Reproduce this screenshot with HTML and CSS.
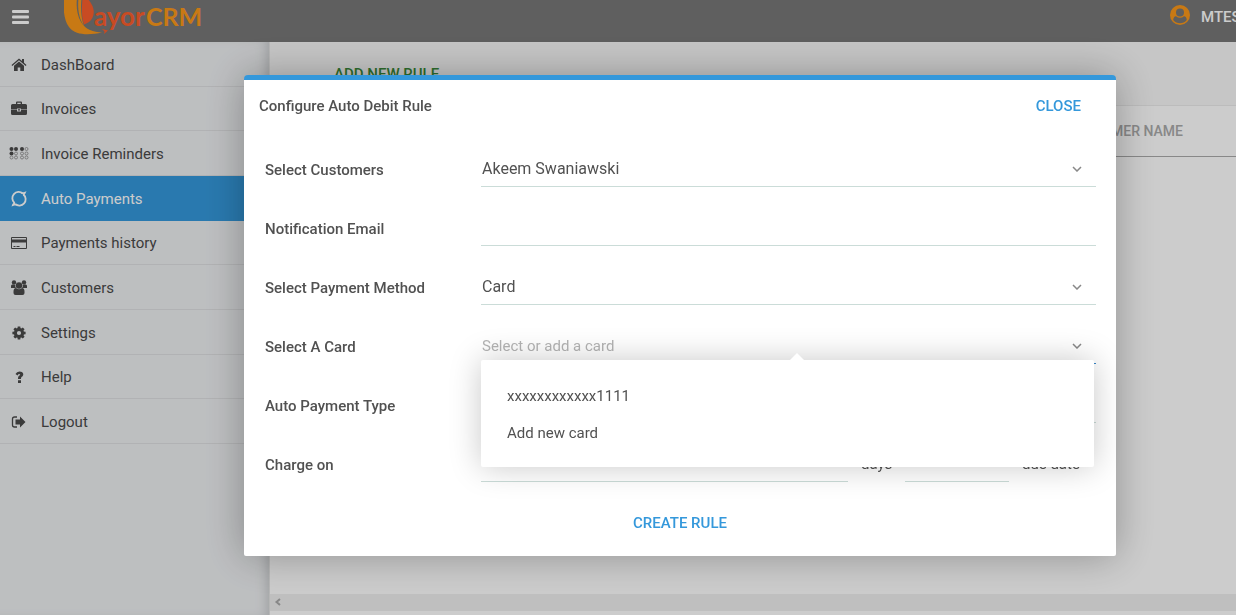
FILE: index.html
```html
<!DOCTYPE html>
<html lang="en">
<head>
<meta charset="utf-8">
<meta name="viewport" content="width=device-width, initial-scale=1">
<title>PayorCRM - Auto Payments</title>
<link rel="stylesheet" href="styles.css">
</head>
<body>
<div class="app">
  <header class="topbar">
    <button class="menu-toggle" type="button" aria-label="Toggle menu">
      <svg width="17" height="14" viewBox="0 0 17 14" fill="currentColor"><rect width="17" height="3" rx="1"/><rect y="5.5" width="17" height="3" rx="1"/><rect y="11" width="17" height="3" rx="1"/></svg>
    </button>
    <a class="brand" href="#" aria-label="PayorCRM">
      <svg width="142" height="36" viewBox="0 0 142 36">
        <path d="M0-2C-1 10 0 20 5 27C12 36 26 35 38 32.500C29 32 22 30 17 22C13 15 12 7 13-2Z" fill="#fb9819"/>
        <path d="M14.500-2C13.500 8 14.500 18 20 26C17 18 16.500 8 17.500-2Z" fill="#fb9819"/>
        <path d="M18.500-2C17.500 8 17.500 17 20 24.500C29 22 32 13 28 5Q26 1 23-2Z" fill="#fa5e2c"/>
        <path d="M38 29L44 30.500L40 34L40.500 31.500Z" fill="#fa5e2c"/>
        <text class="brand-a" x="30" y="26">ayor</text>
        <text class="brand-b" x="82" y="26">CRM</text>
      </svg>
    </a>
    <div class="user">
      <svg width="22" height="22" viewBox="0 0 22 22"><circle cx="11" cy="11" r="10" fill="#fb9819"/><g fill="#777"><circle cx="11" cy="8.500" r="4"/><path d="M4.200 16Q4.500 12.500 7 12.200Q11 15.500 15 12.200Q17.500 12.500 17.800 16Q15 19.300 11 19.300Q7 19.300 4.200 16Z"/></g></svg>
      <span>MTEST</span>
    </div>
  </header>

  <div class="layout">
    <nav class="sidebar">
      <ul class="nav">
        <li><a href="#"><svg class="ico" viewBox="0 0 18 18"><path d="M9 2.500L1.500 9L2.300 10L9 4.300L15.700 10L16.500 9L14 6.800V3H12V5.100Z"/><path d="M9 5.400L4 9.700V15H7.700V11.500H10.300V15H14V9.700Z"/></svg>DashBoard</a></li>
        <li><a href="#"><svg class="ico" viewBox="0 0 18 18"><path d="M6 4V2.500Q6 1.500 7 1.500H11Q12 1.500 12 2.500V4H15.500Q17 4 17 5.500V9.500H11V8.500H7V9.500H1V5.500Q1 4 2.500 4ZM7.300 4H10.700V2.800H7.300ZM1 10H7V11.500H11V10H17V13.500Q17 15 15.500 15H2.500Q1 15 1 13.500ZM8 9.200H10V10.600H8Z" fill-rule="evenodd"/></svg>Invoices</a></li>
        <li><a href="#"><svg class="ico ico-wide" viewBox="0 0 20 18"><g><circle cx="2.500" cy="4" r="2"/><circle cx="7" cy="4" r="2"/><circle cx="2.500" cy="8.500" r="2"/><circle cx="13" cy="4" r="2"/></g><g fill="none" stroke="#888" stroke-width=".8"><circle cx="7" cy="8.500" r="1.500"/><circle cx="2.500" cy="12.500" r="1.500"/><circle cx="7" cy="12.500" r="1.500"/><circle cx="17.500" cy="4" r="1.500"/><circle cx="13" cy="8.500" r="1.500"/><circle cx="17.500" cy="8.500" r="1.500"/><circle cx="13" cy="12.500" r="1.500"/><circle cx="17.500" cy="12.500" r="1.500"/></g></svg>Invoice Reminders</a></li>
        <li><a class="active" href="#" aria-current="page"><svg class="ico" viewBox="0 0 18 18"><path class="line" d="M12.800 3.500A6 6 0 0 0 4.500 13M5.200 14A6 6 0 0 0 13.500 4.500"/><path d="M8 2.200Q12 3 16.500 1.200Q15.500 4.500 13 6L12.800 4ZM10 15.500Q6 14.500 1.500 16.500Q2.500 13 5 11.500L5.200 13.800Z"/></svg>Auto Payments</a></li>
        <li><a href="#"><svg class="ico" viewBox="0 0 18 18"><path d="M2 3H16Q17 3 17 4V14Q17 15 16 15H2Q1 15 1 14V4Q1 3 2 3ZM2 4V5.500H16V4ZM2 8.500V14H16V8.500ZM3.500 12H5.500V13H3.500ZM6.500 12H9.500V13H6.500Z" fill-rule="evenodd"/></svg>Payments history</a></li>
        <li><a href="#"><svg class="ico" viewBox="0 0 18 18"><circle cx="4" cy="3.500" r="2.200"/><circle cx="14" cy="3.500" r="2.200"/><path d="M1 9V7Q1 5.300 2.500 5.500L5.300 6Q5 8 6 9ZM17 9V7Q17 5.300 15.500 5.500L12.700 6Q13 8 12 9Z"/><circle cx="9" cy="6.500" r="3.200"/><path d="M3.500 14V12.500Q3.500 9 6 9Q9 11.500 12 9Q14.500 9 14.500 12.500V14Q14.500 16 12.500 16H5.500Q3.500 16 3.500 14Z"/></svg>Customers</a></li>
        <li><a href="#"><svg class="ico" viewBox="0 0 18 18"><circle cx="9" cy="9" r="3.600" fill="none" stroke="currentColor" stroke-width="3"/><path d="M7.700 2.400H10.300L10.600 5H7.400ZM7.400 13H10.600L10.300 15.600H7.700ZM2.400 7.700L5 7.400V10.600L2.400 10.300ZM15.600 7.700L13 7.400V10.600L15.600 10.300ZM3.400 5.200L5.200 3.400L7.300 5L5 7.300ZM12.800 3.400L14.600 5.200L13 7.300L10.700 5ZM3.400 12.800L5.200 14.600L7.300 13L5 10.700ZM12.800 14.600L14.600 12.800L13 10.700L10.700 13Z"/></svg>Settings</a></li>
        <li><a href="#"><svg class="ico" viewBox="0 0 18 18"><path d="M8 12.300H11V15H8ZM5.500 6Q6.700 3.500 9.500 3.500C13.500 3.500 14.500 7.300 11.800 8.800Q11 9.300 11 10.500V11H8V10Q8 8.500 9.500 7.600Q11 6.400 9.300 6Q8.300 6 7.500 7.400Z"/></svg>Help</a></li>
        <li><a href="#"><svg class="ico" viewBox="0 0 18 18"><path d="M7 4H4.500Q2.500 4 2.500 6V12Q2.500 14 4.500 14H7" fill="none" stroke="currentColor" stroke-width="1.300"/><path d="M10 3.500L15.500 9L10 14.500V11.500H5.500V6.500H10Z"/></svg>Logout</a></li>
      </ul>
    </nav>

    <main class="content">
      <div class="toolbar"><button class="add-rule" type="button">ADD NEW RULE</button></div>
      <table class="rules">
        <thead><tr><th scope="col">CUSTOMER NAME</th></tr></thead>
      </table>
      <div class="scroll-track">
        <svg width="8" height="8" viewBox="0 0 8 8" fill="none" stroke="#aaa" stroke-width="2"><path d="M6 1L2.500 4L6 7"/></svg>
      </div>
    </main>
  </div>
</div>

<div class="overlay">
  <form class="modal" role="dialog" aria-labelledby="modal-title">
    <div class="modal-head">
      <h2 class="modal-title" id="modal-title">Configure Auto Debit Rule</h2>
      <button class="link-button" type="button">CLOSE</button>
    </div>
    <div class="modal-body">
      <div class="row">
        <label class="label" for="customer">Select Customers</label>
        <div class="field"><select class="control" id="customer"><option>Akeem Swaniawski</option></select><svg class="chevron" viewBox="0 0 10 6"><path d="M1 1L5 5L9 1"/></svg></div>
      </div>
      <div class="row">
        <label class="label" for="email">Notification Email</label>
        <div class="field"><input class="control" id="email" type="email"></div>
      </div>
      <div class="row">
        <label class="label" for="method">Select Payment Method</label>
        <div class="field"><select class="control" id="method"><option>Card</option></select><svg class="chevron" viewBox="0 0 10 6"><path d="M1 1L5 5L9 1"/></svg></div>
      </div>
      <div class="row">
        <label class="label" for="card">Select A Card</label>
        <div class="field">
          <select class="control control-open" id="card"><option>Select or add a card</option></select><svg class="chevron" viewBox="0 0 10 6"><path d="M1 1L5 5L9 1"/></svg>
          <div class="popup">
            <button class="choice" type="button">xxxxxxxxxxxx1111</button>
            <button class="choice" type="button">Add new card</button>
          </div>
        </div>
      </div>
      <div class="row">
        <label class="label" for="type">Auto Payment Type</label>
        <div class="field"><select class="control" id="type"></select></div>
      </div>
      <div class="row">
        <label class="label" for="days">Charge on</label>
        <div class="field charge">
          <input class="control" id="days" type="text">
          <label class="unit" for="days">days</label>
          <select class="control control-short" id="when" aria-label="Before or after due date"></select>
          <label class="unit unit-last" for="when">due date</label>
        </div>
      </div>
    </div>
    <div class="modal-foot"><button class="link-button" type="submit">CREATE RULE</button></div>
  </form>
</div>
</body>
</html>
```
FILE: styles.css
```css
* { box-sizing: border-box; }

body {
  margin: 0;
  overflow: hidden;
  background: #fff;
  color: #4a4a4a;
  font: 15px/20px Roboto, "Liberation Sans", sans-serif;
}

button, input, select { font: inherit; color: inherit; }
button { padding: 0; border: 0; background: none; cursor: pointer; }

.app { display: flex; flex-direction: column; height: 100vh; }

/* Top bar */
.topbar {
  display: flex;
  align-items: flex-start;
  height: 42px;
  flex: none;
  padding-left: 12px;
  overflow: hidden;
  background: #777;
  color: #fff;
}
.menu-toggle { display: flex; margin: 10px 35px 0 0; }
.brand { display: block; }
.brand svg { display: block; }
.brand-a, .brand-b { font-family: Lato, sans-serif; font-size: 26px; font-weight: 700; }
.brand-a { fill: #fa5e2c; }
.brand-b { fill: #fb9819; font-size: 25px; }
.user {
  display: flex;
  align-items: center;
  gap: 10px;
  width: 67px;
  margin: 3px 0 0 auto;
  white-space: nowrap;
}
.user svg { flex: none; }
.user span { padding-top: 4px; font-weight: 500; }

.layout { display: flex; flex: 1; min-height: 0; }

/* Sidebar */
.sidebar {
  flex: 0 0 269px;
  background: #edeff1;
  box-shadow: inset -8px 0 12px -6px #c4c6c9;
}
.nav {
  display: grid;
  grid-auto-rows: 1fr;
  height: 402px;
  margin: 0;
  padding: 0;
  list-style: none;
}
.nav a {
  display: flex;
  align-items: center;
  gap: 13px;
  height: 100%;
  padding: 2px 0 0 10px;
  border-bottom: 1px solid #dedfe1;
  color: inherit;
  text-decoration: none;
}
.nav .active { background: #3498db; border-color: #3498db; color: #fff; }
.ico { width: 18px; height: 18px; flex: none; fill: currentColor; }
.ico-wide { width: 20px; margin: 0 -1px; }
.line { fill: none; stroke: currentColor; stroke-width: 1.8; }

/* Page content */
.content { display: flex; flex: 1; flex-direction: column; min-width: 0; border-left: 1px solid #e4e4e4; }
.toolbar { height: 64px; padding: 22px 64px; border-bottom: 1px solid #ebebeb; background: #f8f8f8; }
.add-rule { color: #388a38; font-weight: 500; }
.rules { width: 100%; border-collapse: collapse; }
.rules th {
  height: 50px;
  padding: 0 53px 0 0;
  border-bottom: 1px solid #aaa;
  color: #aaa;
  font-size: 14px;
  font-weight: 500;
  text-align: right;
}
.scroll-track { display: flex; align-items: center; height: 17px; margin: auto 0 4px; padding: 0 0 2px 4px; background: #efefef; }

/* Dialog */
.overlay {
  position: fixed;
  inset: 0;
  padding: 75px 120px 0 244px;
  background: rgba(0, 0, 0, .2);
}
.modal {
  border-top: 5px solid #3498db;
  border-radius: 4px 4px 2px 2px;
  background: #fff;
  color: #515151;
  box-shadow: 0 0 40px rgba(0, 0, 0, .3);
}
.modal-head { display: flex; justify-content: space-between; padding: 16px 35px 12px 15px; }
.modal-title { margin: 0; font-size: 15px; font-weight: 500; }
.link-button { color: #3498db; font-weight: 500; }
.modal-body { padding: 0 20px 0 21px; }
.row { display: flex; align-items: flex-end; height: 59px; }
.label { flex: 0 0 216px; padding-bottom: 7px; font-weight: 500; }
.field { position: relative; flex: 1; min-width: 0; }
.control {
  display: block;
  width: 100%;
  height: 37px;
  margin: 0;
  padding: 2px 1px 0;
  border: 0;
  border-bottom: 1px solid #cbdcd8;
  border-radius: 0;
  outline: 0;
  background: transparent;
  font-size: 16px;
  appearance: none;
}
.control-open { border-color: #3a87c8; color: #b4b4b4; font-size: 15px; }
.chevron {
  position: absolute;
  top: 16px;
  right: 14px;
  width: 10px;
  height: 6px;
  fill: none;
  stroke: #888;
  stroke-width: 1.5;
  pointer-events: none;
}
.charge { display: flex; align-items: flex-end; }
.charge .control { flex: 1; min-width: 0; }
.charge .control-short { flex: 0 0 104px; }
.unit { width: 57px; padding: 0 0 8px 13px; white-space: nowrap; }
.unit-last { width: 87px; }

/* Card list */
.popup {
  position: absolute;
  z-index: 1;
  top: 33px;
  left: 0;
  right: 2px;
  padding: 17px 0 16px;
  border-radius: 2px;
  background: #fff;
  box-shadow: 0 0 32px rgba(0, 0, 0, .22);
}
.popup::before {
  content: "";
  position: absolute;
  top: -7px;
  left: calc(50% + 2px);
  border: solid transparent;
  border-width: 0 7px 7px;
  border-bottom-color: #fff;
}
.choice { display: block; width: 100%; height: 37px; padding: 0 26px; text-align: left; }
.modal-foot { display: flex; justify-content: center; padding: 31px 0 23px; }
```
